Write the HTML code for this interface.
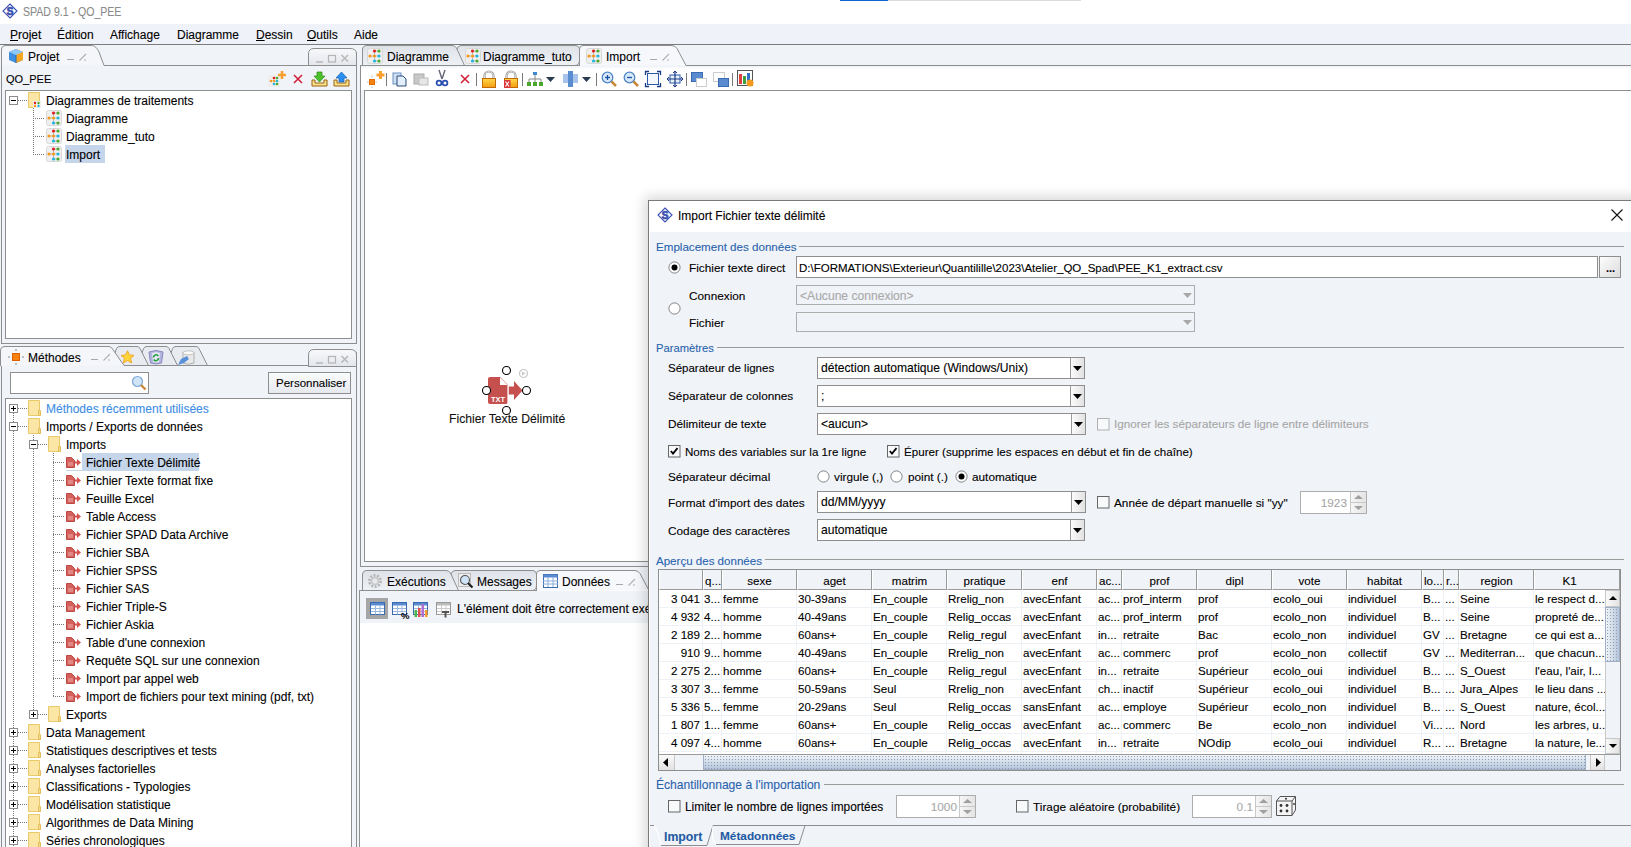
<!DOCTYPE html>
<html><head><meta charset="utf-8"><style>
*{box-sizing:border-box;margin:0;padding:0}
html,body{width:1631px;height:847px;overflow:hidden}
body{position:relative;-webkit-text-stroke:0.1px currentColor;background:#f0f3f8;font-family:"Liberation Sans",sans-serif;font-size:12px;color:#000}
.a{position:absolute}
.t{position:absolute;white-space:nowrap;line-height:18px;height:18px}
.w{background:#fff}
.hl{position:absolute;height:1px;background:#8e8e8e}
.vl{position:absolute;width:1px;background:#8e8e8e}
.u{text-decoration:underline}
.bx{position:absolute;border:1px solid #8e8e8e}
svg{position:absolute;overflow:visible}
</style></head><body>
<div class="a" style="left:0px;top:0px;width:1631px;height:24px;background:#fff"></div>
<div class="a" style="left:840px;top:0px;width:48px;height:1px;background:#0a64d0"></div>
<div class="a" style="left:888px;top:0px;width:193px;height:1px;background:#dcdcdc"></div>
<svg style="left:2px;top:3px" width="17" height="17" viewBox="0 0 17 17"><path d="M8 1 L15 8 L8 15 L1 8 Z" fill="#fff" stroke="#3a50b0" stroke-width="1.1"/><text x="8" y="11.6" font-size="10" font-weight="bold" text-anchor="middle" fill="#3a50b0" stroke="#3a50b0" stroke-width="0.7" font-family="Liberation Sans">S</text></svg>
<div class="t" style="left:23px;top:3px;color:#8a8a8a;font-size:12px;transform:scaleX(0.88);transform-origin:0 0">SPAD 9.1 - QO_PEE</div>
<div class="a" style="left:1px;top:24px;width:1630px;height:20px;background:#eff2f8"></div>
<div class="t" style="left:10px;top:26px;"><span class="u">P</span>rojet</div>
<div class="t" style="left:57px;top:26px;">Édition</div>
<div class="t" style="left:110px;top:26px;">Affichage</div>
<div class="t" style="left:177px;top:26px;">Diagramme</div>
<div class="t" style="left:256px;top:26px;"><span class="u">D</span>essin</div>
<div class="t" style="left:307px;top:26px;"><span class="u">O</span>utils</div>
<div class="t" style="left:354px;top:26px;">Aide</div>
<div class="a" style="left:0px;top:44px;width:1631px;height:1px;background:#7c7c7c"></div>
<div class="a" style="left:1px;top:52px;width:356px;height:292px;border:1px solid #8e8e8e;border-top:none"></div>
<svg style="left:0px;top:45px" width="360" height="21" viewBox="0 0 360 21"><path d="M1.5 20 V5 Q1.5 0.5 6 0.5 H91 C95 0.5 97 3 99 7 L104 20.5" fill="#f4f6fa" stroke="#8e8e8e"/><path d="M104 20.5 H356" stroke="#8e8e8e"/></svg>
<svg style="left:308px;top:48px" width="49" height="19" viewBox="0 0 49 19"><defs><linearGradient id="mmg" x1="0" y1="0" x2="0" y2="1"><stop offset="0" stop-color="#f8f9fb"/><stop offset="1" stop-color="#e3e6eb"/></linearGradient></defs><path d="M0.5 17.5 V6 Q0.5 0.5 6 0.5 H42 Q48.5 0.5 48.5 6 V17.5" fill="url(#mmg)" stroke="#8e8e8e"/><path d="M0 17.5 H49" stroke="#8e8e8e"/><path d="M8 14 H15" stroke="#b0b0b0" stroke-width="1.3"/><rect x="20.5" y="7.5" width="7" height="6.5" fill="none" stroke="#b4b4b4" stroke-width="1.2"/><path d="M33.5 7 L40 13.5 M40 7 L33.5 13.5" stroke="#b8b8b8" stroke-width="1.5"/></svg>
<svg style="left:8px;top:48px" width="16" height="16" viewBox="0 0 16 16"><path d="M1 4 L8 1 L15 4 V12 L8 15 L1 12 Z" fill="#3f8fe0"/><path d="M8 1 L15 4 V12 L8 15 Z" fill="#f5a623"/><path d="M1 4 L8 7 L15 4 L8 1Z" fill="#8ec8f5"/><path d="M8 7 V15" stroke="#2a6ab0"/></svg>
<div class="t" style="left:28px;top:48px;">Projet</div>
<svg style="left:66px;top:53px" width="24" height="8" viewBox="0 0 24 8"><path d="M1 6.5 H8" stroke="#a8a8a8"/><path d="M13.5 7.5 L20 1 M18 7 H20" fill="none" stroke="#b0b0b0" stroke-width="1.1"/></svg>
<div class="t" style="left:6px;top:70px;font-size:11px">QO_PEE</div>
<svg style="left:268px;top:71px" width="18" height="16" viewBox="0 0 18 16"><rect x="0" y="4" width="12" height="12" fill="#eee"/><circle cx="3" cy="10" r="1.3" fill="#f39a1e"/><circle cx="6" cy="7" r="1.3" fill="#e02020"/><circle cx="9" cy="7" r="1.3" fill="#4aa82a"/><circle cx="6" cy="10" r="1.3" fill="#f39a1e"/><circle cx="9" cy="10" r="1.3" fill="#22b5e0"/><circle cx="6" cy="13" r="1.3" fill="#22b5e0"/><circle cx="9" cy="13" r="1.3" fill="#4aa82a"/><path d="M14 0 V8 M10 4 H18" stroke="#f7a030" stroke-width="2.6"/></svg>
<svg style="left:293px;top:74px" width="10" height="10" viewBox="0 0 10 10"><path d="M1 1 L9 9 M9 1 L1 9" stroke="#d0203a" stroke-width="1.6"/></svg>
<svg style="left:311px;top:71px" width="17" height="16" viewBox="0 0 17 16"><path d="M1 9 V15 H16 V9 H13 V12 H4 V9 Z" fill="#f9e08a" stroke="#9a6510"/><path d="M6 1 H11 V5 H14 L8.5 11 L3 5 H6 Z" fill="#4cc22a" stroke="#2f8a18" stroke-width="0.7"/></svg>
<svg style="left:333px;top:71px" width="17" height="16" viewBox="0 0 17 16"><path d="M1 9 V15 H16 V9 H13 V12 H4 V9 Z" fill="#f9e08a" stroke="#9a6510"/><path d="M6 11 H11 V7 H14 L8.5 1 L3 7 H6 Z" fill="#2a8ff0" stroke="#1a5fb0" stroke-width="0.7"/></svg>
<div class="a" style="left:5px;top:90px;width:347px;height:249px;background:#fff;border:1px solid #8e8e8e"></div>
<svg style="left:9px;top:96px" width="9" height="9" viewBox="0 0 9 9"><rect x="0.5" y="0.5" width="8" height="8" fill="#fff" stroke="#8c8c8c"/><path d="M2 4.5 H7" stroke="#000"/></svg>
<svg style="left:18px;top:100px" width="12" height="1" viewBox="0 0 12 1"><path d="M0 0.5 H10" stroke="#777" stroke-dasharray="1 1"/></svg>
<svg style="left:28px;top:92px" width="14" height="16" viewBox="0 0 14 16"><path d="M0.5 0.5 H11.5 V15.5 H0.5 Z" fill="#fbe6a6" stroke="#e9c96a"/><rect x="5" y="9" width="8" height="7" fill="#eee"/><circle cx="7" cy="11" r="1.2" fill="#e02020"/><circle cx="10.5" cy="11" r="1.2" fill="#4aa82a"/><circle cx="7" cy="14" r="1.2" fill="#f39a1e"/><circle cx="10.5" cy="14" r="1.2" fill="#22b5e0"/></svg>
<div class="t" style="left:46px;top:92px;">Diagrammes de traitements</div>
<svg style="left:33px;top:108px" width="1" height="48" viewBox="0 0 1 48"><path d="M0.5 0 V47" stroke="#777" stroke-dasharray="1 1"/></svg>
<svg style="left:33px;top:118px" width="12" height="1" viewBox="0 0 12 1"><path d="M0 0.5 H12" stroke="#777" stroke-dasharray="1 1"/></svg>
<svg style="left:46px;top:110px" width="16" height="16" viewBox="0 0 16 16"><rect x="0.5" y="0.5" width="15" height="15" rx="2" fill="#efefef" stroke="#d8d8d8"/><path d="M7.5 3 V13 M3 8 H12 M7.5 3 H12 M7.5 13 H12" stroke="#bbb" stroke-width="1"/><circle cx="7.5" cy="3" r="1.6" fill="#e02020"/><circle cx="12" cy="3" r="1.6" fill="#4aa82a"/><circle cx="3" cy="8" r="1.6" fill="#f39a1e"/><circle cx="7.5" cy="8" r="1.6" fill="#f39a1e"/><circle cx="12" cy="8" r="1.6" fill="#22b5e0"/><circle cx="7.5" cy="13" r="1.6" fill="#22b5e0"/><circle cx="12" cy="13" r="1.6" fill="#4aa82a"/></svg>
<div class="t" style="left:66px;top:110px;">Diagramme</div>
<svg style="left:33px;top:136px" width="12" height="1" viewBox="0 0 12 1"><path d="M0 0.5 H12" stroke="#777" stroke-dasharray="1 1"/></svg>
<svg style="left:46px;top:128px" width="16" height="16" viewBox="0 0 16 16"><rect x="0.5" y="0.5" width="15" height="15" rx="2" fill="#efefef" stroke="#d8d8d8"/><path d="M7.5 3 V13 M3 8 H12 M7.5 3 H12 M7.5 13 H12" stroke="#bbb" stroke-width="1"/><circle cx="7.5" cy="3" r="1.6" fill="#e02020"/><circle cx="12" cy="3" r="1.6" fill="#4aa82a"/><circle cx="3" cy="8" r="1.6" fill="#f39a1e"/><circle cx="7.5" cy="8" r="1.6" fill="#f39a1e"/><circle cx="12" cy="8" r="1.6" fill="#22b5e0"/><circle cx="7.5" cy="13" r="1.6" fill="#22b5e0"/><circle cx="12" cy="13" r="1.6" fill="#4aa82a"/></svg>
<div class="t" style="left:66px;top:128px;">Diagramme_tuto</div>
<svg style="left:33px;top:154px" width="12" height="1" viewBox="0 0 12 1"><path d="M0 0.5 H12" stroke="#777" stroke-dasharray="1 1"/></svg>
<svg style="left:46px;top:146px" width="16" height="16" viewBox="0 0 16 16"><rect x="0.5" y="0.5" width="15" height="15" rx="2" fill="#efefef" stroke="#d8d8d8"/><path d="M7.5 3 V13 M3 8 H12 M7.5 3 H12 M7.5 13 H12" stroke="#bbb" stroke-width="1"/><circle cx="7.5" cy="3" r="1.6" fill="#e02020"/><circle cx="12" cy="3" r="1.6" fill="#4aa82a"/><circle cx="3" cy="8" r="1.6" fill="#f39a1e"/><circle cx="7.5" cy="8" r="1.6" fill="#f39a1e"/><circle cx="12" cy="8" r="1.6" fill="#22b5e0"/><circle cx="7.5" cy="13" r="1.6" fill="#22b5e0"/><circle cx="12" cy="13" r="1.6" fill="#4aa82a"/></svg>
<div class="a" style="left:65px;top:145px;width:40px;height:18px;background:#c5d5ea"></div>
<div class="t" style="left:66px;top:146px;">Import</div>
<div class="a" style="left:1px;top:352px;width:356px;height:500px;border:1px solid #8e8e8e;border-top:none"></div>
<svg style="left:0px;top:345px" width="360" height="22" viewBox="0 0 360 22"><path d="M167 20.5 L172.5 3.5 Q173.5 1.5 176 1.5 H196 Q198 1.5 199 3.5 L207.5 20.5" fill="#e8ebf0" stroke="#8e8e8e"/><path d="M138 20.5 L143.5 3.5 Q144.5 1.5 147 1.5 H166 Q168 1.5 169 3.5 L177.5 20.5" fill="#e8ebf0" stroke="#8e8e8e"/><path d="M111 20.5 L116.5 3.5 Q117.5 1.5 120 1.5 H137 Q139 1.5 140 3.5 L148.5 20.5" fill="#e8ebf0" stroke="#8e8e8e"/><path d="M0.5 21 V6 Q0.5 1.5 5 1.5 H109 Q111 1.5 112.5 4 L124 20.5 H356" fill="#f4f6fa" stroke="#8e8e8e"/></svg>
<svg style="left:120px;top:350px" width="15" height="14" viewBox="0 0 15 14"><path d="M7.5 0.8 L9.5 5 L14 5.4 L10.6 8.4 L11.7 13 L7.5 10.6 L3.3 13 L4.4 8.4 L1 5.4 L5.5 5 Z" fill="#ffd53a" stroke="#f0a020" stroke-width="0.9"/></svg>
<svg style="left:148px;top:349px" width="16" height="16" viewBox="0 0 16 16"><path d="M1 3 Q8 0 15 3 L13.5 14 Q8 16 2.5 14 Z" fill="#b4b4e0" stroke="#8a8ac0"/><path d="M4 4 Q8 2.5 12 4 L11 13 Q8 14 5 13 Z" fill="#e6e6f6"/><path d="M5.5 8.5 A2.6 2.6 0 0 1 10.3 7 M10.5 9 A2.6 2.6 0 0 1 5.7 10.5" fill="none" stroke="#22a03a" stroke-width="1.6"/></svg>
<svg style="left:178px;top:350px" width="18" height="16" viewBox="0 0 18 16"><path d="M5 2.5 Q10.5 0 16 2.5 V13 Q10.5 15.5 5 13 Z" fill="#e8e8e8" stroke="#b0b0b0"/><ellipse cx="10.5" cy="2.8" rx="5.5" ry="2" fill="#fafafa" stroke="#c0c0c0"/><path d="M0 15 L3 9 L9 6 L11 9 L6 13 Z" fill="#5a90d8"/></svg>
<svg style="left:308px;top:349px" width="49" height="19" viewBox="0 0 49 19"><defs><linearGradient id="mmg" x1="0" y1="0" x2="0" y2="1"><stop offset="0" stop-color="#f8f9fb"/><stop offset="1" stop-color="#e3e6eb"/></linearGradient></defs><path d="M0.5 17.5 V6 Q0.5 0.5 6 0.5 H42 Q48.5 0.5 48.5 6 V17.5" fill="url(#mmg)" stroke="#8e8e8e"/><path d="M0 17.5 H49" stroke="#8e8e8e"/><path d="M8 14 H15" stroke="#b0b0b0" stroke-width="1.3"/><rect x="20.5" y="7.5" width="7" height="6.5" fill="none" stroke="#b4b4b4" stroke-width="1.2"/><path d="M33.5 7 L40 13.5 M40 7 L33.5 13.5" stroke="#b8b8b8" stroke-width="1.5"/></svg>
<svg style="left:8px;top:349px" width="16" height="16" viewBox="0 0 16 16"><rect x="4.5" y="4.5" width="7" height="7" fill="#f7820f" stroke="#e06000"/><path d="M8 0 V2 M8 14 V16 M0 8 H2 M14 8 H16" stroke="#aaa" stroke-width="1.5"/></svg>
<div class="t" style="left:28px;top:349px;">Méthodes</div>
<svg style="left:90px;top:353px" width="24" height="8" viewBox="0 0 24 8"><path d="M1 6.5 H8" stroke="#a8a8a8"/><path d="M13.5 7.5 L20 1 M18 7 H20" fill="none" stroke="#b0b0b0" stroke-width="1.1"/></svg>
<div class="a" style="left:10px;top:372px;width:139px;height:22px;background:#fff;border:1px solid #8e8e8e"></div>
<svg style="left:131px;top:375px" width="16" height="16" viewBox="0 0 16 16"><circle cx="6.5" cy="6.5" r="5" fill="#cfe4f7" stroke="#7aa8d8" stroke-width="1.2"/><path d="M10 10 L14.5 14.5" stroke="#c88a3a" stroke-width="2.4"/></svg>
<div class="a" style="left:268px;top:372px;width:83px;height:22px;border:1px solid #8e8e8e;background:linear-gradient(#fafbfc,#e6e9ee)"></div>
<div class="t" style="left:276px;top:374px;font-size:11.5px">Personnaliser</div>
<div class="a" style="left:5px;top:398px;width:347px;height:460px;background:#fff;border:1px solid #8e8e8e"></div>
<svg style="left:13px;top:413px" width="1" height="440" viewBox="0 0 1 440"><path d="M0.5 0 V440" stroke="#777" stroke-dasharray="1 1"/></svg>
<svg style="left:33px;top:431px" width="1" height="284" viewBox="0 0 1 284"><path d="M0.5 0 V283" stroke="#777" stroke-dasharray="1 1"/></svg>
<svg style="left:53px;top:449px" width="1" height="248" viewBox="0 0 1 248"><path d="M0.5 0 V247" stroke="#777" stroke-dasharray="1 1"/></svg>
<svg style="left:9px;top:404px" width="9" height="9" viewBox="0 0 9 9"><rect x="0.5" y="0.5" width="8" height="8" fill="#fff" stroke="#8c8c8c"/><path d="M2 4.5 H7" stroke="#000"/><path d="M4.5 2 V7" stroke="#000"/></svg>
<svg style="left:18px;top:408px" width="10" height="1" viewBox="0 0 10 1"><path d="M0 0.5 H9" stroke="#777" stroke-dasharray="1 1"/></svg>
<svg style="left:28px;top:400px" width="14" height="16" viewBox="0 0 14 16"><path d="M0.5 0.5 H11.5 V12 H12.5 V15.5 H0.5 Z" fill="#fbe6a6" stroke="#e9c96a"/><path d="M10.5 10.5 H12.5 V15.5 H10.5 Z" fill="#f6d98a" stroke="#e2bf5c"/></svg>
<div class="t" style="left:46px;top:400px;color:#3d8ee6">Méthodes récemment utilisées</div>
<svg style="left:9px;top:422px" width="9" height="9" viewBox="0 0 9 9"><rect x="0.5" y="0.5" width="8" height="8" fill="#fff" stroke="#8c8c8c"/><path d="M2 4.5 H7" stroke="#000"/></svg>
<svg style="left:18px;top:426px" width="10" height="1" viewBox="0 0 10 1"><path d="M0 0.5 H9" stroke="#777" stroke-dasharray="1 1"/></svg>
<svg style="left:28px;top:418px" width="14" height="16" viewBox="0 0 14 16"><path d="M0.5 0.5 H11.5 V12 H12.5 V15.5 H0.5 Z" fill="#fbe6a6" stroke="#e9c96a"/><path d="M10.5 10.5 H12.5 V15.5 H10.5 Z" fill="#f6d98a" stroke="#e2bf5c"/></svg>
<div class="t" style="left:46px;top:418px;">Imports / Exports de données</div>
<svg style="left:29px;top:440px" width="9" height="9" viewBox="0 0 9 9"><rect x="0.5" y="0.5" width="8" height="8" fill="#fff" stroke="#8c8c8c"/><path d="M2 4.5 H7" stroke="#000"/></svg>
<svg style="left:38px;top:444px" width="10" height="1" viewBox="0 0 10 1"><path d="M0 0.5 H9" stroke="#777" stroke-dasharray="1 1"/></svg>
<svg style="left:48px;top:436px" width="14" height="16" viewBox="0 0 14 16"><path d="M0.5 0.5 H11.5 V12 H12.5 V15.5 H0.5 Z" fill="#fbe6a6" stroke="#e9c96a"/><path d="M10.5 10.5 H12.5 V15.5 H10.5 Z" fill="#f6d98a" stroke="#e2bf5c"/></svg>
<div class="t" style="left:66px;top:436px;">Imports</div>
<div class="a" style="left:82px;top:453px;width:117px;height:18px;background:#c5d5ea"></div>
<div class="a" style="left:66px;top:470px;width:16px;height:1px;background:#c5d5ea"></div>
<svg style="left:53px;top:462px" width="13" height="1" viewBox="0 0 13 1"><path d="M0 0.5 H12" stroke="#777" stroke-dasharray="1 1"/></svg>
<svg style="left:66px;top:457px" width="16" height="12" viewBox="0 0 16 12"><path d="M0.5 0.5 H5.5 L8.5 3.5 V10.5 H0.5 Z" fill="#d4605c" stroke="#c04844"/><path d="M2 6 H7 M2 8 H7" stroke="#f2c4c2" stroke-width="0.8"/><path d="M9 4.5 H11 V2 L15 5.5 L11 9 V6.5 H9 Z" fill="#d65450"/></svg>
<div class="t" style="left:86px;top:454px;">Fichier Texte Délimité</div>
<svg style="left:53px;top:480px" width="13" height="1" viewBox="0 0 13 1"><path d="M0 0.5 H12" stroke="#777" stroke-dasharray="1 1"/></svg>
<svg style="left:66px;top:475px" width="16" height="12" viewBox="0 0 16 12"><path d="M0.5 0.5 H5.5 L8.5 3.5 V10.5 H0.5 Z" fill="#d4605c" stroke="#c04844"/><path d="M2 6 H7 M2 8 H7" stroke="#f2c4c2" stroke-width="0.8"/><path d="M9 4.5 H11 V2 L15 5.5 L11 9 V6.5 H9 Z" fill="#d65450"/></svg>
<div class="t" style="left:86px;top:472px;">Fichier Texte format fixe</div>
<svg style="left:53px;top:498px" width="13" height="1" viewBox="0 0 13 1"><path d="M0 0.5 H12" stroke="#777" stroke-dasharray="1 1"/></svg>
<svg style="left:66px;top:493px" width="16" height="12" viewBox="0 0 16 12"><path d="M0.5 0.5 H5.5 L8.5 3.5 V10.5 H0.5 Z" fill="#d4605c" stroke="#c04844"/><path d="M2 6 H7 M2 8 H7" stroke="#f2c4c2" stroke-width="0.8"/><path d="M9 4.5 H11 V2 L15 5.5 L11 9 V6.5 H9 Z" fill="#d65450"/></svg>
<div class="t" style="left:86px;top:490px;">Feuille Excel</div>
<svg style="left:53px;top:516px" width="13" height="1" viewBox="0 0 13 1"><path d="M0 0.5 H12" stroke="#777" stroke-dasharray="1 1"/></svg>
<svg style="left:66px;top:511px" width="16" height="12" viewBox="0 0 16 12"><path d="M0.5 0.5 H5.5 L8.5 3.5 V10.5 H0.5 Z" fill="#d4605c" stroke="#c04844"/><path d="M2 6 H7 M2 8 H7" stroke="#f2c4c2" stroke-width="0.8"/><path d="M9 4.5 H11 V2 L15 5.5 L11 9 V6.5 H9 Z" fill="#d65450"/></svg>
<div class="t" style="left:86px;top:508px;">Table Access</div>
<svg style="left:53px;top:534px" width="13" height="1" viewBox="0 0 13 1"><path d="M0 0.5 H12" stroke="#777" stroke-dasharray="1 1"/></svg>
<svg style="left:66px;top:529px" width="16" height="12" viewBox="0 0 16 12"><path d="M0.5 0.5 H5.5 L8.5 3.5 V10.5 H0.5 Z" fill="#d4605c" stroke="#c04844"/><path d="M2 6 H7 M2 8 H7" stroke="#f2c4c2" stroke-width="0.8"/><path d="M9 4.5 H11 V2 L15 5.5 L11 9 V6.5 H9 Z" fill="#d65450"/></svg>
<div class="t" style="left:86px;top:526px;">Fichier SPAD Data Archive</div>
<svg style="left:53px;top:552px" width="13" height="1" viewBox="0 0 13 1"><path d="M0 0.5 H12" stroke="#777" stroke-dasharray="1 1"/></svg>
<svg style="left:66px;top:547px" width="16" height="12" viewBox="0 0 16 12"><path d="M0.5 0.5 H5.5 L8.5 3.5 V10.5 H0.5 Z" fill="#d4605c" stroke="#c04844"/><path d="M2 6 H7 M2 8 H7" stroke="#f2c4c2" stroke-width="0.8"/><path d="M9 4.5 H11 V2 L15 5.5 L11 9 V6.5 H9 Z" fill="#d65450"/></svg>
<div class="t" style="left:86px;top:544px;">Fichier SBA</div>
<svg style="left:53px;top:570px" width="13" height="1" viewBox="0 0 13 1"><path d="M0 0.5 H12" stroke="#777" stroke-dasharray="1 1"/></svg>
<svg style="left:66px;top:565px" width="16" height="12" viewBox="0 0 16 12"><path d="M0.5 0.5 H5.5 L8.5 3.5 V10.5 H0.5 Z" fill="#d4605c" stroke="#c04844"/><path d="M2 6 H7 M2 8 H7" stroke="#f2c4c2" stroke-width="0.8"/><path d="M9 4.5 H11 V2 L15 5.5 L11 9 V6.5 H9 Z" fill="#d65450"/></svg>
<div class="t" style="left:86px;top:562px;">Fichier SPSS</div>
<svg style="left:53px;top:588px" width="13" height="1" viewBox="0 0 13 1"><path d="M0 0.5 H12" stroke="#777" stroke-dasharray="1 1"/></svg>
<svg style="left:66px;top:583px" width="16" height="12" viewBox="0 0 16 12"><path d="M0.5 0.5 H5.5 L8.5 3.5 V10.5 H0.5 Z" fill="#d4605c" stroke="#c04844"/><path d="M2 6 H7 M2 8 H7" stroke="#f2c4c2" stroke-width="0.8"/><path d="M9 4.5 H11 V2 L15 5.5 L11 9 V6.5 H9 Z" fill="#d65450"/></svg>
<div class="t" style="left:86px;top:580px;">Fichier SAS</div>
<svg style="left:53px;top:606px" width="13" height="1" viewBox="0 0 13 1"><path d="M0 0.5 H12" stroke="#777" stroke-dasharray="1 1"/></svg>
<svg style="left:66px;top:601px" width="16" height="12" viewBox="0 0 16 12"><path d="M0.5 0.5 H5.5 L8.5 3.5 V10.5 H0.5 Z" fill="#d4605c" stroke="#c04844"/><path d="M2 6 H7 M2 8 H7" stroke="#f2c4c2" stroke-width="0.8"/><path d="M9 4.5 H11 V2 L15 5.5 L11 9 V6.5 H9 Z" fill="#d65450"/></svg>
<div class="t" style="left:86px;top:598px;">Fichier Triple-S</div>
<svg style="left:53px;top:624px" width="13" height="1" viewBox="0 0 13 1"><path d="M0 0.5 H12" stroke="#777" stroke-dasharray="1 1"/></svg>
<svg style="left:66px;top:619px" width="16" height="12" viewBox="0 0 16 12"><path d="M0.5 0.5 H5.5 L8.5 3.5 V10.5 H0.5 Z" fill="#d4605c" stroke="#c04844"/><path d="M2 6 H7 M2 8 H7" stroke="#f2c4c2" stroke-width="0.8"/><path d="M9 4.5 H11 V2 L15 5.5 L11 9 V6.5 H9 Z" fill="#d65450"/></svg>
<div class="t" style="left:86px;top:616px;">Fichier Askia</div>
<svg style="left:53px;top:642px" width="13" height="1" viewBox="0 0 13 1"><path d="M0 0.5 H12" stroke="#777" stroke-dasharray="1 1"/></svg>
<svg style="left:66px;top:637px" width="16" height="12" viewBox="0 0 16 12"><path d="M0.5 0.5 H5.5 L8.5 3.5 V10.5 H0.5 Z" fill="#d4605c" stroke="#c04844"/><path d="M2 6 H7 M2 8 H7" stroke="#f2c4c2" stroke-width="0.8"/><path d="M9 4.5 H11 V2 L15 5.5 L11 9 V6.5 H9 Z" fill="#d65450"/></svg>
<div class="t" style="left:86px;top:634px;">Table d'une connexion</div>
<svg style="left:53px;top:660px" width="13" height="1" viewBox="0 0 13 1"><path d="M0 0.5 H12" stroke="#777" stroke-dasharray="1 1"/></svg>
<svg style="left:66px;top:655px" width="16" height="12" viewBox="0 0 16 12"><path d="M0.5 0.5 H5.5 L8.5 3.5 V10.5 H0.5 Z" fill="#d4605c" stroke="#c04844"/><path d="M2 6 H7 M2 8 H7" stroke="#f2c4c2" stroke-width="0.8"/><path d="M9 4.5 H11 V2 L15 5.5 L11 9 V6.5 H9 Z" fill="#d65450"/></svg>
<div class="t" style="left:86px;top:652px;">Requête SQL sur une connexion</div>
<svg style="left:53px;top:678px" width="13" height="1" viewBox="0 0 13 1"><path d="M0 0.5 H12" stroke="#777" stroke-dasharray="1 1"/></svg>
<svg style="left:66px;top:673px" width="16" height="12" viewBox="0 0 16 12"><path d="M0.5 0.5 H5.5 L8.5 3.5 V10.5 H0.5 Z" fill="#d4605c" stroke="#c04844"/><path d="M2 6 H7 M2 8 H7" stroke="#f2c4c2" stroke-width="0.8"/><path d="M9 4.5 H11 V2 L15 5.5 L11 9 V6.5 H9 Z" fill="#d65450"/></svg>
<div class="t" style="left:86px;top:670px;">Import par appel web</div>
<svg style="left:53px;top:696px" width="13" height="1" viewBox="0 0 13 1"><path d="M0 0.5 H12" stroke="#777" stroke-dasharray="1 1"/></svg>
<svg style="left:66px;top:691px" width="16" height="12" viewBox="0 0 16 12"><path d="M0.5 0.5 H5.5 L8.5 3.5 V10.5 H0.5 Z" fill="#d4605c" stroke="#c04844"/><path d="M2 6 H7 M2 8 H7" stroke="#f2c4c2" stroke-width="0.8"/><path d="M9 4.5 H11 V2 L15 5.5 L11 9 V6.5 H9 Z" fill="#d65450"/></svg>
<div class="t" style="left:86px;top:688px;">Import de fichiers pour text mining (pdf, txt)</div>
<svg style="left:29px;top:710px" width="9" height="9" viewBox="0 0 9 9"><rect x="0.5" y="0.5" width="8" height="8" fill="#fff" stroke="#8c8c8c"/><path d="M2 4.5 H7" stroke="#000"/><path d="M4.5 2 V7" stroke="#000"/></svg>
<svg style="left:38px;top:714px" width="10" height="1" viewBox="0 0 10 1"><path d="M0 0.5 H9" stroke="#777" stroke-dasharray="1 1"/></svg>
<svg style="left:48px;top:706px" width="14" height="16" viewBox="0 0 14 16"><path d="M0.5 0.5 H11.5 V12 H12.5 V15.5 H0.5 Z" fill="#fbe6a6" stroke="#e9c96a"/><path d="M10.5 10.5 H12.5 V15.5 H10.5 Z" fill="#f6d98a" stroke="#e2bf5c"/></svg>
<div class="t" style="left:66px;top:706px;">Exports</div>
<svg style="left:9px;top:728px" width="9" height="9" viewBox="0 0 9 9"><rect x="0.5" y="0.5" width="8" height="8" fill="#fff" stroke="#8c8c8c"/><path d="M2 4.5 H7" stroke="#000"/><path d="M4.5 2 V7" stroke="#000"/></svg>
<svg style="left:18px;top:732px" width="10" height="1" viewBox="0 0 10 1"><path d="M0 0.5 H9" stroke="#777" stroke-dasharray="1 1"/></svg>
<svg style="left:28px;top:724px" width="14" height="16" viewBox="0 0 14 16"><path d="M0.5 0.5 H11.5 V12 H12.5 V15.5 H0.5 Z" fill="#fbe6a6" stroke="#e9c96a"/><path d="M10.5 10.5 H12.5 V15.5 H10.5 Z" fill="#f6d98a" stroke="#e2bf5c"/></svg>
<div class="t" style="left:46px;top:724px;">Data Management</div>
<svg style="left:9px;top:746px" width="9" height="9" viewBox="0 0 9 9"><rect x="0.5" y="0.5" width="8" height="8" fill="#fff" stroke="#8c8c8c"/><path d="M2 4.5 H7" stroke="#000"/><path d="M4.5 2 V7" stroke="#000"/></svg>
<svg style="left:18px;top:750px" width="10" height="1" viewBox="0 0 10 1"><path d="M0 0.5 H9" stroke="#777" stroke-dasharray="1 1"/></svg>
<svg style="left:28px;top:742px" width="14" height="16" viewBox="0 0 14 16"><path d="M0.5 0.5 H11.5 V12 H12.5 V15.5 H0.5 Z" fill="#fbe6a6" stroke="#e9c96a"/><path d="M10.5 10.5 H12.5 V15.5 H10.5 Z" fill="#f6d98a" stroke="#e2bf5c"/></svg>
<div class="t" style="left:46px;top:742px;">Statistiques descriptives et tests</div>
<svg style="left:9px;top:764px" width="9" height="9" viewBox="0 0 9 9"><rect x="0.5" y="0.5" width="8" height="8" fill="#fff" stroke="#8c8c8c"/><path d="M2 4.5 H7" stroke="#000"/><path d="M4.5 2 V7" stroke="#000"/></svg>
<svg style="left:18px;top:768px" width="10" height="1" viewBox="0 0 10 1"><path d="M0 0.5 H9" stroke="#777" stroke-dasharray="1 1"/></svg>
<svg style="left:28px;top:760px" width="14" height="16" viewBox="0 0 14 16"><path d="M0.5 0.5 H11.5 V12 H12.5 V15.5 H0.5 Z" fill="#fbe6a6" stroke="#e9c96a"/><path d="M10.5 10.5 H12.5 V15.5 H10.5 Z" fill="#f6d98a" stroke="#e2bf5c"/></svg>
<div class="t" style="left:46px;top:760px;">Analyses factorielles</div>
<svg style="left:9px;top:782px" width="9" height="9" viewBox="0 0 9 9"><rect x="0.5" y="0.5" width="8" height="8" fill="#fff" stroke="#8c8c8c"/><path d="M2 4.5 H7" stroke="#000"/><path d="M4.5 2 V7" stroke="#000"/></svg>
<svg style="left:18px;top:786px" width="10" height="1" viewBox="0 0 10 1"><path d="M0 0.5 H9" stroke="#777" stroke-dasharray="1 1"/></svg>
<svg style="left:28px;top:778px" width="14" height="16" viewBox="0 0 14 16"><path d="M0.5 0.5 H11.5 V12 H12.5 V15.5 H0.5 Z" fill="#fbe6a6" stroke="#e9c96a"/><path d="M10.5 10.5 H12.5 V15.5 H10.5 Z" fill="#f6d98a" stroke="#e2bf5c"/></svg>
<div class="t" style="left:46px;top:778px;">Classifications - Typologies</div>
<svg style="left:9px;top:800px" width="9" height="9" viewBox="0 0 9 9"><rect x="0.5" y="0.5" width="8" height="8" fill="#fff" stroke="#8c8c8c"/><path d="M2 4.5 H7" stroke="#000"/><path d="M4.5 2 V7" stroke="#000"/></svg>
<svg style="left:18px;top:804px" width="10" height="1" viewBox="0 0 10 1"><path d="M0 0.5 H9" stroke="#777" stroke-dasharray="1 1"/></svg>
<svg style="left:28px;top:796px" width="14" height="16" viewBox="0 0 14 16"><path d="M0.5 0.5 H11.5 V12 H12.5 V15.5 H0.5 Z" fill="#fbe6a6" stroke="#e9c96a"/><path d="M10.5 10.5 H12.5 V15.5 H10.5 Z" fill="#f6d98a" stroke="#e2bf5c"/></svg>
<div class="t" style="left:46px;top:796px;">Modélisation statistique</div>
<svg style="left:9px;top:818px" width="9" height="9" viewBox="0 0 9 9"><rect x="0.5" y="0.5" width="8" height="8" fill="#fff" stroke="#8c8c8c"/><path d="M2 4.5 H7" stroke="#000"/><path d="M4.5 2 V7" stroke="#000"/></svg>
<svg style="left:18px;top:822px" width="10" height="1" viewBox="0 0 10 1"><path d="M0 0.5 H9" stroke="#777" stroke-dasharray="1 1"/></svg>
<svg style="left:28px;top:814px" width="14" height="16" viewBox="0 0 14 16"><path d="M0.5 0.5 H11.5 V12 H12.5 V15.5 H0.5 Z" fill="#fbe6a6" stroke="#e9c96a"/><path d="M10.5 10.5 H12.5 V15.5 H10.5 Z" fill="#f6d98a" stroke="#e2bf5c"/></svg>
<div class="t" style="left:46px;top:814px;">Algorithmes de Data Mining</div>
<svg style="left:9px;top:836px" width="9" height="9" viewBox="0 0 9 9"><rect x="0.5" y="0.5" width="8" height="8" fill="#fff" stroke="#8c8c8c"/><path d="M2 4.5 H7" stroke="#000"/><path d="M4.5 2 V7" stroke="#000"/></svg>
<svg style="left:18px;top:840px" width="10" height="1" viewBox="0 0 10 1"><path d="M0 0.5 H9" stroke="#777" stroke-dasharray="1 1"/></svg>
<svg style="left:28px;top:832px" width="14" height="16" viewBox="0 0 14 16"><path d="M0.5 0.5 H11.5 V12 H12.5 V15.5 H0.5 Z" fill="#fbe6a6" stroke="#e9c96a"/><path d="M10.5 10.5 H12.5 V15.5 H10.5 Z" fill="#f6d98a" stroke="#e2bf5c"/></svg>
<div class="t" style="left:46px;top:832px;">Séries chronologiques</div>
<div class="a" style="left:360px;top:65px;width:1280px;height:502px;border:1px solid #8e8e8e;border-top:none"></div>
<svg style="left:359px;top:45px" width="1280" height="22" viewBox="0 0 1280 22"><defs><linearGradient id="tg" x1="0" y1="0" x2="0" y2="1"><stop offset="0" stop-color="#dfe3e9"/><stop offset="1" stop-color="#eef1f5"/></linearGradient></defs><path d="M94 20.5 L98 4 Q99 0.5 102 0.5 H216 Q220.5 0.5 220.5 5 V15 Q220.5 20.5 216 20.5" fill="url(#tg)" stroke="#8e8e8e"/><path d="M3.5 20.5 V5 Q3.5 0.5 8 0.5 H93 Q96 0.5 97.5 3 L105.5 20.5" fill="url(#tg)" stroke="#8e8e8e"/><path d="M220.5 20.5 V4 Q220.5 0.5 224 0.5 H313 Q316 0.5 318 3.5 L327 20.5 H1280" fill="#f6f8fb" stroke="#8e8e8e"/><path d="M1 20.5 H221" stroke="#8e8e8e"/></svg>
<svg style="left:367px;top:48px" width="16" height="16" viewBox="0 0 16 16"><rect x="0.5" y="0.5" width="15" height="15" rx="2" fill="#efefef" stroke="#d8d8d8"/><path d="M7.5 3 V13 M3 8 H12 M7.5 3 H12 M7.5 13 H12" stroke="#bbb" stroke-width="1"/><circle cx="7.5" cy="3" r="1.6" fill="#e02020"/><circle cx="12" cy="3" r="1.6" fill="#4aa82a"/><circle cx="3" cy="8" r="1.6" fill="#f39a1e"/><circle cx="7.5" cy="8" r="1.6" fill="#f39a1e"/><circle cx="12" cy="8" r="1.6" fill="#22b5e0"/><circle cx="7.5" cy="13" r="1.6" fill="#22b5e0"/><circle cx="12" cy="13" r="1.6" fill="#4aa82a"/></svg>
<div class="t" style="left:387px;top:48px;">Diagramme</div>
<svg style="left:465px;top:48px" width="16" height="16" viewBox="0 0 16 16"><rect x="0.5" y="0.5" width="15" height="15" rx="2" fill="#efefef" stroke="#d8d8d8"/><path d="M7.5 3 V13 M3 8 H12 M7.5 3 H12 M7.5 13 H12" stroke="#bbb" stroke-width="1"/><circle cx="7.5" cy="3" r="1.6" fill="#e02020"/><circle cx="12" cy="3" r="1.6" fill="#4aa82a"/><circle cx="3" cy="8" r="1.6" fill="#f39a1e"/><circle cx="7.5" cy="8" r="1.6" fill="#f39a1e"/><circle cx="12" cy="8" r="1.6" fill="#22b5e0"/><circle cx="7.5" cy="13" r="1.6" fill="#22b5e0"/><circle cx="12" cy="13" r="1.6" fill="#4aa82a"/></svg>
<div class="t" style="left:483px;top:48px;">Diagramme_tuto</div>
<svg style="left:586px;top:48px" width="16" height="16" viewBox="0 0 16 16"><rect x="0.5" y="0.5" width="15" height="15" rx="2" fill="#efefef" stroke="#d8d8d8"/><path d="M7.5 3 V13 M3 8 H12 M7.5 3 H12 M7.5 13 H12" stroke="#bbb" stroke-width="1"/><circle cx="7.5" cy="3" r="1.6" fill="#e02020"/><circle cx="12" cy="3" r="1.6" fill="#4aa82a"/><circle cx="3" cy="8" r="1.6" fill="#f39a1e"/><circle cx="7.5" cy="8" r="1.6" fill="#f39a1e"/><circle cx="12" cy="8" r="1.6" fill="#22b5e0"/><circle cx="7.5" cy="13" r="1.6" fill="#22b5e0"/><circle cx="12" cy="13" r="1.6" fill="#4aa82a"/></svg>
<div class="t" style="left:606px;top:48px;">Import</div>
<svg style="left:649px;top:53px" width="24" height="8" viewBox="0 0 24 8"><path d="M1 6.5 H8" stroke="#a8a8a8"/><path d="M13.5 7.5 L20 1 M18 7 H20" fill="none" stroke="#b0b0b0" stroke-width="1.1"/></svg>
<div class="a" style="left:361px;top:66px;width:1270px;height:24px;background:linear-gradient(#eef2f8 0px,#fff 3px,#fff)"></div>
<div class="a" style="left:364px;top:90px;width:1280px;height:472px;background:#fff;border:1px solid #8e8e8e"></div>
<svg style="left:367px;top:70px" width="18" height="18" viewBox="0 0 18 18"><rect x="2.5" y="9.5" width="5" height="5" fill="#f7820f" stroke="#e06a00"/><path d="M5 5.5 V7.5 M5 16.5 V18 M0 12 H1.5 M8.5 12 H10" stroke="#bbb"/><path d="M9.5 5 H17.5 M13.5 1 V9" stroke="#f9a030" stroke-width="3"/></svg>
<div class="a" style="left:386px;top:73px;width:1px;height:13px;background:#7a7a7a"></div>
<svg style="left:392px;top:71px" width="15" height="16" viewBox="0 0 15 16"><rect x="1" y="2" width="8" height="11" fill="#cfe0f5" stroke="#6a8fc0"/><path d="M5 5 H11 L14 8 V15 H5 Z" fill="#e2eefb" stroke="#2a4a78"/></svg>
<svg style="left:413px;top:72px" width="16" height="14" viewBox="0 0 16 14"><rect x="1" y="2" width="10" height="10" fill="#c8c8c8" stroke="#aaa"/><rect x="6" y="6" width="9" height="7" fill="#e6e6e6" stroke="#bbb"/></svg>
<svg style="left:436px;top:70px" width="12" height="17" viewBox="0 0 12 17"><path d="M3 0 L6 9 M9 0 L6 9" stroke="#667" stroke-width="1.4"/><circle cx="3" cy="13" r="2.4" fill="none" stroke="#2a4fb0" stroke-width="1.8"/><circle cx="9" cy="13" r="2.4" fill="none" stroke="#2a4fb0" stroke-width="1.8"/></svg>
<svg style="left:460px;top:74px" width="10" height="10" viewBox="0 0 10 10"><path d="M1 1 L9 9 M9 1 L1 9" stroke="#d0203a" stroke-width="1.6"/></svg>
<div class="a" style="left:476px;top:73px;width:1px;height:13px;background:#7a7a7a"></div>
<svg style="left:481px;top:70px" width="16" height="18" viewBox="0 0 16 18"><defs><linearGradient id="lk481" x1="0" y1="0" x2="0" y2="1"><stop offset="0" stop-color="#ffd84a"/><stop offset="1" stop-color="#f59a10"/></linearGradient></defs><path d="M3.5 9 V6 A4.5 4.5 0 0 1 12.5 6 V9" fill="none" stroke="#9a9a9a" stroke-width="2.2"/><path d="M3.5 9 V6 A4.5 4.5 0 0 1 12.5 6 V9" fill="none" stroke="#e8e8e8" stroke-width="0.8"/><rect x="1.5" y="8.5" width="13" height="9" fill="url(#lk481)" stroke="#c06a00"/></svg>
<svg style="left:503px;top:70px" width="16" height="18" viewBox="0 0 16 18"><defs><linearGradient id="lk503" x1="0" y1="0" x2="0" y2="1"><stop offset="0" stop-color="#ffd84a"/><stop offset="1" stop-color="#f59a10"/></linearGradient></defs><path d="M3.5 9 V6 A4.5 4.5 0 0 1 12.5 6 V9" fill="none" stroke="#9a9a9a" stroke-width="2.2"/><path d="M3.5 9 V6 A4.5 4.5 0 0 1 12.5 6 V9" fill="none" stroke="#e8e8e8" stroke-width="0.8"/><rect x="1.5" y="8.5" width="13" height="9" fill="url(#lk503)" stroke="#c06a00"/><rect x="1" y="10" width="6.5" height="8" fill="#d83838"/><path d="M2.5 11.5 L6 16.5 M6 11.5 L2.5 16.5" stroke="#fff" stroke-width="1.1"/></svg>
<div class="a" style="left:522px;top:73px;width:1px;height:13px;background:#7a7a7a"></div>
<svg style="left:527px;top:71px" width="17" height="16" viewBox="0 0 17 16"><rect x="6" y="1" width="4" height="3" fill="#3a8ad8"/><path d="M8 4 V8 M2 8 H14 M2 8 V11 M8 8 V11 M14 8 V11" stroke="#888"/><rect x="0" y="11" width="4" height="4" fill="#4aa82a"/><rect x="6" y="11" width="4" height="4" fill="#4aa82a"/><rect x="12" y="11" width="4" height="4" fill="#4aa82a"/></svg>
<svg style="left:546px;top:77px" width="10" height="6" viewBox="0 0 10 6"><path d="M0 0 H9 L4.5 5 Z" fill="#2a3a50"/></svg>
<svg style="left:563px;top:70px" width="16" height="18" viewBox="0 0 16 18"><rect x="0" y="4" width="5" height="9" fill="#a8c4ec"/><rect x="5" y="1" width="5" height="16" fill="#5a8cd0"/><rect x="10" y="4" width="5" height="9" fill="#a8c4ec"/></svg>
<svg style="left:582px;top:77px" width="10" height="6" viewBox="0 0 10 6"><path d="M0 0 H9 L4.5 5 Z" fill="#2a3a50"/></svg>
<div class="a" style="left:596px;top:73px;width:1px;height:13px;background:#7a7a7a"></div>
<svg style="left:601px;top:71px" width="16" height="16" viewBox="0 0 16 16"><circle cx="6.5" cy="6.5" r="5.3" fill="#d6e8fa" stroke="#4f86c8" stroke-width="1.3"/><path d="M10.5 10.5 L15 15" stroke="#c88a3a" stroke-width="2.5"/><path d="M4 6.5 H9" stroke="#1a50a0" stroke-width="1.3"/><path d="M6.5 4 V9" stroke="#1a50a0" stroke-width="1.3"/></svg>
<svg style="left:623px;top:71px" width="16" height="16" viewBox="0 0 16 16"><circle cx="6.5" cy="6.5" r="5.3" fill="#d6e8fa" stroke="#4f86c8" stroke-width="1.3"/><path d="M10.5 10.5 L15 15" stroke="#c88a3a" stroke-width="2.5"/><path d="M4 6.5 H9" stroke="#1a50a0" stroke-width="1.3"/></svg>
<svg style="left:645px;top:71px" width="16" height="16" viewBox="0 0 16 16"><rect x="2.5" y="2.5" width="11" height="11" fill="#f4f8fc" stroke="#2a5aa8"/><path d="M0.5 4 V0.5 H4 M12 0.5 H15.5 V4 M15.5 12 V15.5 H12 M4 15.5 H0.5 V12" stroke="#1a3a88" stroke-width="1.3" fill="none"/></svg>
<svg style="left:667px;top:71px" width="16" height="16" viewBox="0 0 16 16"><rect x="3" y="4" width="10" height="8" fill="#e8f0f8" stroke="#2a5aa8"/><path d="M8 0 V16 M0 8 H16" stroke="#1a3a88" stroke-width="1.2"/><path d="M6 2 L8 0 L10 2 M6 14 L8 16 L10 14 M2 6 L0 8 L2 10 M14 6 L16 8 L14 10" fill="none" stroke="#1a3a88"/></svg>
<div class="a" style="left:686px;top:73px;width:1px;height:13px;background:#7a7a7a"></div>
<svg style="left:691px;top:72px" width="16" height="15" viewBox="0 0 16 15"><rect x="0.5" y="0.5" width="11" height="9" fill="#5a8ad0" stroke="#3a6ab0"/><rect x="5.5" y="6.5" width="10" height="8" fill="#fff" stroke="#ccc"/></svg>
<svg style="left:713px;top:72px" width="16" height="15" viewBox="0 0 16 15"><rect x="0.5" y="0.5" width="11" height="9" fill="#fff" stroke="#ccc"/><rect x="5.5" y="6.5" width="10" height="8" fill="#5a8ad0" stroke="#3a6ab0"/></svg>
<div class="a" style="left:732px;top:73px;width:1px;height:13px;background:#7a7a7a"></div>
<svg style="left:737px;top:70px" width="17" height="17" viewBox="0 0 17 17"><rect x="0.5" y="0.5" width="15" height="15" fill="#fff" stroke="#555"/><rect x="2" y="4" width="3" height="10" fill="#e04040"/><rect x="6" y="6" width="3" height="8" fill="#40a040"/><rect x="10" y="3" width="3" height="11" fill="#3070d0"/><circle cx="13" cy="13" r="3.5" fill="#f39a1e"/></svg>
<svg style="left:486px;top:370px" width="42" height="42" viewBox="0 0 42 42"><path d="M2 9 Q2 7 4 7 H14 L22 15 V32 Q22 34 20 34 H4 Q2 34 2 32 Z" fill="#c5504d"/><path d="M14 7.5 V15 H21.5 Z" fill="#fff"/><path d="M22.5 16.5 H28 V11 L36.5 20.5 L28 30 V24.5 H22.5 Z" fill="#c5504d"/><path d="M22 15 V34" stroke="#fff" stroke-width="1.2"/><rect x="2" y="26" width="20" height="0" fill="#fff"/><text x="12" y="31.5" font-size="7.5" font-weight="bold" fill="#fff" text-anchor="middle" font-family="Liberation Sans">TXT</text><circle cx="20.5" cy="0.5" r="4" fill="#fff" stroke="#000" stroke-width="1.1"/><circle cx="0.5" cy="20.5" r="4" fill="#fff" stroke="#000" stroke-width="1.1"/><circle cx="40.5" cy="20.5" r="4" fill="#fff" stroke="#000" stroke-width="1.1"/><circle cx="20.5" cy="40.5" r="4" fill="#fff" stroke="#000" stroke-width="1.1"/><circle cx="37.5" cy="3.5" r="4" fill="#fff" stroke="#c8c8c8" stroke-width="1.2"/><path d="M36 1.5 L39.5 3.5 L36 5.5Z" fill="#c8c8c8"/></svg>
<div class="t" style="left:449px;top:410px;font-size:12.2px;color:#111">Fichier Texte Délimité</div>
<div class="a" style="left:359px;top:590px;width:1280px;height:300px;border:1px solid #8e8e8e;border-top:none;background:#fff"></div>
<svg style="left:359px;top:570px" width="1280" height="22" viewBox="0 0 1280 22"><defs><linearGradient id="tg2" x1="0" y1="0" x2="0" y2="1"><stop offset="0" stop-color="#dfe3e9"/><stop offset="1" stop-color="#eef1f5"/></linearGradient></defs><path d="M88 20.5 L92 4 Q93 0.5 96 0.5 H173 Q177.5 0.5 177.5 5 V15 Q177.5 20.5 173 20.5" fill="url(#tg2)" stroke="#8e8e8e"/><path d="M3.5 20.5 V5 Q3.5 0.5 8 0.5 H87 Q90 0.5 91.5 3 L99.5 20.5" fill="url(#tg2)" stroke="#8e8e8e"/><path d="M177.5 20.5 V4 Q177.5 0.5 181 0.5 H276 Q279 0.5 281 3.5 L290 20.5 H1280" fill="#f6f8fb" stroke="#8e8e8e"/><path d="M1 20.5 H178" stroke="#8e8e8e"/></svg>
<svg style="left:367px;top:573px" width="16" height="16" viewBox="0 0 16 16"><circle cx="8" cy="8" r="5.5" fill="none" stroke="#b8b8b8" stroke-width="3" stroke-dasharray="2 1.4"/><circle cx="8" cy="8" r="3.3" fill="none" stroke="#c8c8c8" stroke-width="1.5"/></svg>
<div class="t" style="left:387px;top:573px;">Exécutions</div>
<svg style="left:458px;top:573px" width="16" height="16" viewBox="0 0 16 16"><rect x="0.5" y="0.5" width="12" height="13" fill="#eee" stroke="#bbb"/><circle cx="7" cy="7" r="4.5" fill="#cfe4f7" stroke="#555" stroke-width="1.1"/><path d="M10 10 L14.5 14.5" stroke="#222" stroke-width="2.2"/></svg>
<div class="t" style="left:477px;top:573px;">Messages</div>
<svg style="left:543px;top:574px" width="15" height="14" viewBox="0 0 15 14"><rect x="0.5" y="0.5" width="14" height="13" fill="#fff" stroke="#3a6ab0"/><rect x="0.5" y="0.5" width="14" height="3" fill="#5a8ad0"/><path d="M5 3 V13 M10 3 V13 M0 7 H15 M0 10 H15" stroke="#8ab0e0"/></svg>
<div class="t" style="left:562px;top:573px;">Données</div>
<svg style="left:615px;top:578px" width="24" height="8" viewBox="0 0 24 8"><path d="M1 6.5 H8" stroke="#a8a8a8"/><path d="M13.5 7.5 L20 1 M18 7 H20" fill="none" stroke="#b0b0b0" stroke-width="1.1"/></svg>
<div class="a" style="left:360px;top:591px;width:1270px;height:32px;background:#f0f3f8"></div>
<div class="a" style="left:366px;top:598px;width:22px;height:21px;background:#a6a6a6"></div>
<svg style="left:370px;top:602px" width="16" height="14" viewBox="0 0 16 14"><rect x="0.5" y="0.5" width="14" height="12" fill="#fff" stroke="#3a6ab0"/><rect x="1" y="1" width="13" height="2.5" fill="#5a8ad0"/><path d="M5.5 3.5 V12.5 M10 3.5 V12.5 M1 6.5 H14 M1 9.5 H14" stroke="#9ab8e0" stroke-width="1"/></svg>
<svg style="left:392px;top:602px" width="18" height="17" viewBox="0 0 18 17"><rect x="0.5" y="0.5" width="14" height="12" fill="#fff" stroke="#3a6ab0"/><rect x="1" y="1" width="13" height="2.5" fill="#5a8ad0"/><path d="M5.5 3.5 V12.5 M10 3.5 V12.5 M1 6.5 H14 M1 9.5 H14" stroke="#9ab8e0" stroke-width="1"/><text x="9" y="16.5" font-size="9.5" font-weight="bold" font-family="Liberation Sans" fill="#000">%</text></svg>
<svg style="left:413px;top:602px" width="16" height="16" viewBox="0 0 16 16"><rect x="0.5" y="0.5" width="14" height="12" fill="#fff" stroke="#3a6ab0"/><rect x="1" y="1" width="13" height="2.5" fill="#5a8ad0"/><path d="M5.5 3.5 V12.5 M10 3.5 V12.5 M1 6.5 H14 M1 9.5 H14" stroke="#9ab8e0" stroke-width="1"/><rect x="1.5" y="8" width="2.5" height="7" fill="#4ab84a"/><rect x="5" y="6" width="2.5" height="9" fill="#e05050"/><rect x="8.5" y="2" width="2.5" height="13" fill="#b070d0"/><rect x="12" y="8" width="2.5" height="7" fill="#f7a030"/></svg>
<svg style="left:436px;top:602px" width="16" height="16" viewBox="0 0 16 16"><rect x="0.5" y="0.5" width="14" height="12" fill="#fff" stroke="#999"/><rect x="1" y="1" width="13" height="2.5" fill="#bbb"/><path d="M5.5 3.5 V12.5 M10 3.5 V12.5 M1 6.5 H14 M1 9.5 H14" stroke="#ccc" stroke-width="1"/><path d="M6 10 H13 M9.5 10 V15.5" stroke="#555" stroke-width="2"/></svg>
<div class="t" style="left:457px;top:600px;">L'élément doit être correctement exécuté pour afficher les données</div>
<div class="a" style="left:636px;top:190px;width:1000px;height:700px;box-shadow:0 0 12px 3px rgba(0,0,0,0.17);left:648px;top:200px;width:1000px;height:700px"></div>
<div class="a" style="left:648px;top:200px;width:1000px;height:700px;background:#fff;border:1px solid #7a7a7a"></div>
<div class="a" style="left:650px;top:232px;width:990px;height:660px;background:#f0f3f8"></div>
<svg style="left:657px;top:207px" width="17" height="17" viewBox="0 0 17 17"><path d="M8 1 L15 8 L8 15 L1 8 Z" fill="#fff" stroke="#3a50b0" stroke-width="1.1"/><text x="8" y="11.6" font-size="10" font-weight="bold" text-anchor="middle" fill="#3a50b0" stroke="#3a50b0" stroke-width="0.7" font-family="Liberation Sans">S</text></svg>
<div class="t" style="left:678px;top:207px;font-size:12px">Import Fichier texte délimité</div>
<svg style="left:1611px;top:209px" width="12" height="12" viewBox="0 0 12 12"><path d="M0.5 0.5 L11.5 11.5 M11.5 0.5 L0.5 11.5" stroke="#111" stroke-width="1.1"/></svg>
<div class="t" style="left:656px;top:238px;color:#2a63ad;font-size:11.6px">Emplacement des données</div>
<div class="a" style="left:799px;top:246px;width:825px;height:1px;background:#9a9a9a"></div>
<svg style="left:667.5px;top:260.5px" width="13" height="13" viewBox="0 0 13 13"><circle cx="6.5" cy="6.5" r="5.6" fill="#fff" stroke="#666" stroke-width="0.8"/><circle cx="6.5" cy="6.5" r="3" fill="#000"/></svg>
<div class="t" style="left:689px;top:259px;font-size:11.8px">Fichier texte direct</div>
<div class="a" style="left:796px;top:256px;width:802px;height:22px;border:1px solid #8e8e8e;background:#fff"></div>
<div class="t" style="left:799px;top:259px;font-size:11.5px">D:\FORMATIONS\Exterieur\Quantilille\2023\Atelier_QO_Spad\PEE_K1_extract.csv</div>
<div class="a" style="left:1599px;top:256px;width:22px;height:22px;border:1px solid #8e8e8e;background:linear-gradient(135deg,#fdfdfd,#dcdcdc)"></div>
<div class="t" style="left:1606px;top:259px;font-size:11px;font-weight:bold">...</div>
<svg style="left:667.5px;top:301.5px" width="13" height="13" viewBox="0 0 13 13"><circle cx="6.5" cy="6.5" r="5.6" fill="#fff" stroke="#666" stroke-width="0.8"/></svg>
<div class="t" style="left:689px;top:287px;font-size:11.8px">Connexion</div>
<div class="a" style="left:796px;top:285px;width:399px;height:20px;border:1px solid #adadad;background:#f0f3f8"></div>
<svg style="left:1183px;top:293px" width="9" height="5" viewBox="0 0 9 5"><path d="M0 0 H9 L4.5 5Z" fill="#a8a8a8"/></svg>
<div class="t" style="left:800px;top:287px;color:#a8a8a8;font-size:12.1px">&lt;Aucune connexion&gt;</div>
<div class="t" style="left:689px;top:314px;font-size:11.8px">Fichier</div>
<div class="a" style="left:796px;top:312px;width:399px;height:20px;border:1px solid #adadad;background:#f0f3f8"></div>
<svg style="left:1183px;top:320px" width="9" height="5" viewBox="0 0 9 5"><path d="M0 0 H9 L4.5 5Z" fill="#a8a8a8"/></svg>
<div class="t" style="left:656px;top:339px;color:#2a63ad;font-size:11.2px">Paramètres</div>
<div class="a" style="left:717px;top:347px;width:907px;height:1px;background:#9a9a9a"></div>
<div class="t" style="left:668px;top:359px;font-size:11.5px">Séparateur de lignes</div>
<div class="a" style="left:817px;top:357px;width:268px;height:22px;border:1px solid #8e8e8e;background:#fff"></div>
<div class="a" style="left:1070px;top:358px;width:14px;height:20px;border-left:1px solid #9a9a9a;background:linear-gradient(90deg,#fbfbfb,#e2e2e2)"></div>
<svg style="left:1073px;top:366px" width="9" height="5" viewBox="0 0 9 5"><path d="M0 0 H9 L4.5 5Z" fill="#000"/></svg>
<div class="t" style="left:821px;top:359px;font-size:12.1px">détection automatique (Windows/Unix)</div>
<div class="t" style="left:668px;top:387px;font-size:11.8px">Séparateur de colonnes</div>
<div class="a" style="left:817px;top:385px;width:268px;height:22px;border:1px solid #8e8e8e;background:#fff"></div>
<div class="a" style="left:1070px;top:386px;width:14px;height:20px;border-left:1px solid #9a9a9a;background:linear-gradient(90deg,#fbfbfb,#e2e2e2)"></div>
<svg style="left:1073px;top:394px" width="9" height="5" viewBox="0 0 9 5"><path d="M0 0 H9 L4.5 5Z" fill="#000"/></svg>
<div class="t" style="left:821px;top:387px;font-size:12.1px">;</div>
<div class="t" style="left:668px;top:415px;font-size:11.8px">Délimiteur de texte</div>
<div class="a" style="left:817px;top:413px;width:269px;height:22px;border:1px solid #8e8e8e;background:#fff"></div>
<div class="a" style="left:1071px;top:414px;width:14px;height:20px;border-left:1px solid #9a9a9a;background:linear-gradient(90deg,#fbfbfb,#e2e2e2)"></div>
<svg style="left:1074px;top:422px" width="9" height="5" viewBox="0 0 9 5"><path d="M0 0 H9 L4.5 5Z" fill="#000"/></svg>
<div class="t" style="left:821px;top:415px;font-size:12.1px">&lt;aucun&gt;</div>
<svg style="left:1097px;top:418px" width="13" height="13" viewBox="0 0 13 13"><rect x="0.5" y="0.5" width="11.5" height="11.5" fill="#f8f9fb" stroke="#b0b0b0"/></svg>
<div class="t" style="left:1114px;top:415px;color:#a6a6a6;font-size:11.72px">Ignorer les séparateurs de ligne entre délimiteurs</div>
<svg style="left:668px;top:445px" width="13" height="13" viewBox="0 0 13 13"><rect x="0.5" y="0.5" width="11.5" height="11.5" fill="#f8f9fb" stroke="#666"/><path d="M2.8 6 L5 8.5 L9.5 3.2" fill="none" stroke="#000" stroke-width="1.8"/></svg>
<div class="t" style="left:685px;top:443px;font-size:11.6px">Noms des variables sur la 1re ligne</div>
<svg style="left:887px;top:445px" width="13" height="13" viewBox="0 0 13 13"><rect x="0.5" y="0.5" width="11.5" height="11.5" fill="#f8f9fb" stroke="#666"/><path d="M2.8 6 L5 8.5 L9.5 3.2" fill="none" stroke="#000" stroke-width="1.8"/></svg>
<div class="t" style="left:904px;top:443px;font-size:11.6px">Épurer (supprime les espaces en début et fin de chaîne)</div>
<div class="t" style="left:668px;top:468px;font-size:11.8px">Séparateur décimal</div>
<svg style="left:816.5px;top:469.5px" width="13" height="13" viewBox="0 0 13 13"><circle cx="6.5" cy="6.5" r="5.6" fill="#fff" stroke="#666" stroke-width="0.8"/></svg>
<div class="t" style="left:834px;top:468px;font-size:11.8px">virgule (,)</div>
<svg style="left:889.5px;top:469.5px" width="13" height="13" viewBox="0 0 13 13"><circle cx="6.5" cy="6.5" r="5.6" fill="#fff" stroke="#666" stroke-width="0.8"/></svg>
<div class="t" style="left:908px;top:468px;font-size:11.8px">point (.)</div>
<svg style="left:954.5px;top:469.5px" width="13" height="13" viewBox="0 0 13 13"><circle cx="6.5" cy="6.5" r="5.6" fill="#fff" stroke="#666" stroke-width="0.8"/><circle cx="6.5" cy="6.5" r="3" fill="#000"/></svg>
<div class="t" style="left:972px;top:468px;font-size:11.8px">automatique</div>
<div class="t" style="left:668px;top:494px;font-size:11.8px">Format d'import des dates</div>
<div class="a" style="left:817px;top:491px;width:269px;height:22px;border:1px solid #8e8e8e;background:#fff"></div>
<div class="a" style="left:1071px;top:492px;width:14px;height:20px;border-left:1px solid #9a9a9a;background:linear-gradient(90deg,#fbfbfb,#e2e2e2)"></div>
<svg style="left:1074px;top:500px" width="9" height="5" viewBox="0 0 9 5"><path d="M0 0 H9 L4.5 5Z" fill="#000"/></svg>
<div class="t" style="left:821px;top:493px;font-size:12.1px">dd/MM/yyyy</div>
<svg style="left:1097px;top:496px" width="13" height="13" viewBox="0 0 13 13"><rect x="0.5" y="0.5" width="11.5" height="11.5" fill="#f8f9fb" stroke="#666"/></svg>
<div class="t" style="left:1114px;top:494px;font-size:11.8px">Année de départ manuelle si "yy"</div>
<div class="a" style="left:1300px;top:491px;width:67px;height:23px;border:1px solid #adadad;background:#fff"></div>
<div class="a" style="left:1350px;top:492px;width:16px;height:21px;border-left:1px solid #c8c8c8;background:linear-gradient(90deg,#f6f6f6,#e4e4e4)"></div>
<div class="a" style="left:1350px;top:502px;width:16px;height:1px;background:#c8c8c8"></div>
<svg style="left:1354px;top:495px" width="9" height="4" viewBox="0 0 9 4"><path d="M0 4 H9 L4.5 0Z" fill="#a0a0a0"/></svg>
<svg style="left:1354px;top:506px" width="9" height="4" viewBox="0 0 9 4"><path d="M0 0 H9 L4.5 4Z" fill="#a0a0a0"/></svg>
<div class="t" style="left:1300px;top:494px;color:#a8a8a8;font-size:11.8px"><span style="display:inline-block;width:47px;text-align:right">1923</span></div>
<div class="t" style="left:668px;top:522px;font-size:11.8px">Codage des caractères</div>
<div class="a" style="left:817px;top:519px;width:268px;height:22px;border:1px solid #8e8e8e;background:#fff"></div>
<div class="a" style="left:1070px;top:520px;width:14px;height:20px;border-left:1px solid #9a9a9a;background:linear-gradient(90deg,#fbfbfb,#e2e2e2)"></div>
<svg style="left:1073px;top:528px" width="9" height="5" viewBox="0 0 9 5"><path d="M0 0 H9 L4.5 5Z" fill="#000"/></svg>
<div class="t" style="left:821px;top:521px;font-size:12.1px">automatique</div>
<div class="t" style="left:656px;top:552px;color:#2a63ad;font-size:11.55px">Aperçu des données</div>
<div class="a" style="left:765px;top:559px;width:859px;height:1px;background:#9a9a9a"></div>
<div class="a" style="left:658px;top:569px;width:963px;height:202px;border:1px solid #8e8e8e;background:#fff"></div>
<div class="a" style="left:659px;top:570px;width:961px;height:20px;background:#f0f3f8"></div>
<div class="a" style="left:659px;top:570px;width:44px;height:20px;border-right:1px solid #9a9a9a;border-bottom:1px solid #9a9a9a;border-left:1px solid #fff"></div>
<div class="a" style="left:703px;top:570px;width:19px;height:20px;border-right:1px solid #9a9a9a;border-bottom:1px solid #9a9a9a;border-left:1px solid #fff"></div>
<div class="t" style="left:705px;top:572px;font-size:11.6px">q...</div>
<div class="a" style="left:722px;top:570px;width:75px;height:20px;border-right:1px solid #9a9a9a;border-bottom:1px solid #9a9a9a;border-left:1px solid #fff"></div>
<div class="t" style="left:722px;top:572px;width:75px;text-align:center;font-size:11.6px">sexe</div>
<div class="a" style="left:797px;top:570px;width:75px;height:20px;border-right:1px solid #9a9a9a;border-bottom:1px solid #9a9a9a;border-left:1px solid #fff"></div>
<div class="t" style="left:797px;top:572px;width:75px;text-align:center;font-size:11.6px">aget</div>
<div class="a" style="left:872px;top:570px;width:75px;height:20px;border-right:1px solid #9a9a9a;border-bottom:1px solid #9a9a9a;border-left:1px solid #fff"></div>
<div class="t" style="left:872px;top:572px;width:75px;text-align:center;font-size:11.6px">matrim</div>
<div class="a" style="left:947px;top:570px;width:75px;height:20px;border-right:1px solid #9a9a9a;border-bottom:1px solid #9a9a9a;border-left:1px solid #fff"></div>
<div class="t" style="left:947px;top:572px;width:75px;text-align:center;font-size:11.6px">pratique</div>
<div class="a" style="left:1022px;top:570px;width:75px;height:20px;border-right:1px solid #9a9a9a;border-bottom:1px solid #9a9a9a;border-left:1px solid #fff"></div>
<div class="t" style="left:1022px;top:572px;width:75px;text-align:center;font-size:11.6px">enf</div>
<div class="a" style="left:1097px;top:570px;width:25px;height:20px;border-right:1px solid #9a9a9a;border-bottom:1px solid #9a9a9a;border-left:1px solid #fff"></div>
<div class="t" style="left:1099px;top:572px;font-size:11.6px">ac...</div>
<div class="a" style="left:1122px;top:570px;width:75px;height:20px;border-right:1px solid #9a9a9a;border-bottom:1px solid #9a9a9a;border-left:1px solid #fff"></div>
<div class="t" style="left:1122px;top:572px;width:75px;text-align:center;font-size:11.6px">prof</div>
<div class="a" style="left:1197px;top:570px;width:75px;height:20px;border-right:1px solid #9a9a9a;border-bottom:1px solid #9a9a9a;border-left:1px solid #fff"></div>
<div class="t" style="left:1197px;top:572px;width:75px;text-align:center;font-size:11.6px">dipl</div>
<div class="a" style="left:1272px;top:570px;width:75px;height:20px;border-right:1px solid #9a9a9a;border-bottom:1px solid #9a9a9a;border-left:1px solid #fff"></div>
<div class="t" style="left:1272px;top:572px;width:75px;text-align:center;font-size:11.6px">vote</div>
<div class="a" style="left:1347px;top:570px;width:75px;height:20px;border-right:1px solid #9a9a9a;border-bottom:1px solid #9a9a9a;border-left:1px solid #fff"></div>
<div class="t" style="left:1347px;top:572px;width:75px;text-align:center;font-size:11.6px">habitat</div>
<div class="a" style="left:1422px;top:570px;width:22px;height:20px;border-right:1px solid #9a9a9a;border-bottom:1px solid #9a9a9a;border-left:1px solid #fff"></div>
<div class="t" style="left:1424px;top:572px;font-size:11.6px">lo...</div>
<div class="a" style="left:1444px;top:570px;width:15px;height:20px;border-right:1px solid #9a9a9a;border-bottom:1px solid #9a9a9a;border-left:1px solid #fff"></div>
<div class="t" style="left:1446px;top:572px;font-size:11.6px">r...</div>
<div class="a" style="left:1459px;top:570px;width:75px;height:20px;border-right:1px solid #9a9a9a;border-bottom:1px solid #9a9a9a;border-left:1px solid #fff"></div>
<div class="t" style="left:1459px;top:572px;width:75px;text-align:center;font-size:11.6px">region</div>
<div class="a" style="left:1534px;top:570px;width:86px;height:20px;border-right:1px solid #9a9a9a;border-bottom:1px solid #9a9a9a;border-left:1px solid #fff"></div>
<div class="t" style="left:1534px;top:572px;width:71px;text-align:center;font-size:11.6px">K1</div>
<div class="a" style="left:659px;top:607px;width:946px;height:1px;background:#eef1f6"></div>
<div class="a" style="left:659px;top:625px;width:946px;height:1px;background:#eef1f6"></div>
<div class="a" style="left:659px;top:643px;width:946px;height:1px;background:#eef1f6"></div>
<div class="a" style="left:659px;top:661px;width:946px;height:1px;background:#eef1f6"></div>
<div class="a" style="left:659px;top:679px;width:946px;height:1px;background:#eef1f6"></div>
<div class="a" style="left:659px;top:697px;width:946px;height:1px;background:#eef1f6"></div>
<div class="a" style="left:659px;top:715px;width:946px;height:1px;background:#eef1f6"></div>
<div class="a" style="left:659px;top:733px;width:946px;height:1px;background:#eef1f6"></div>
<div class="a" style="left:659px;top:751px;width:946px;height:1px;background:#eef1f6"></div>
<div class="a" style="left:659px;top:769px;width:946px;height:1px;background:#eef1f6"></div>
<div class="a" style="left:702px;top:590px;width:1px;height:164px;background:#eef1f6"></div>
<div class="a" style="left:721px;top:590px;width:1px;height:164px;background:#eef1f6"></div>
<div class="a" style="left:796px;top:590px;width:1px;height:164px;background:#eef1f6"></div>
<div class="a" style="left:871px;top:590px;width:1px;height:164px;background:#eef1f6"></div>
<div class="a" style="left:946px;top:590px;width:1px;height:164px;background:#eef1f6"></div>
<div class="a" style="left:1021px;top:590px;width:1px;height:164px;background:#eef1f6"></div>
<div class="a" style="left:1096px;top:590px;width:1px;height:164px;background:#eef1f6"></div>
<div class="a" style="left:1121px;top:590px;width:1px;height:164px;background:#eef1f6"></div>
<div class="a" style="left:1196px;top:590px;width:1px;height:164px;background:#eef1f6"></div>
<div class="a" style="left:1271px;top:590px;width:1px;height:164px;background:#eef1f6"></div>
<div class="a" style="left:1346px;top:590px;width:1px;height:164px;background:#eef1f6"></div>
<div class="a" style="left:1421px;top:590px;width:1px;height:164px;background:#eef1f6"></div>
<div class="a" style="left:1443px;top:590px;width:1px;height:164px;background:#eef1f6"></div>
<div class="a" style="left:1458px;top:590px;width:1px;height:164px;background:#eef1f6"></div>
<div class="a" style="left:1533px;top:590px;width:1px;height:164px;background:#eef1f6"></div>
<div class="t" style="left:659px;top:590px;width:41px;text-align:right;font-size:11.6px">3 041</div>
<div class="t" style="left:704px;top:590px;font-size:11.6px">3...</div>
<div class="t" style="left:723px;top:590px;font-size:11.6px">femme</div>
<div class="t" style="left:798px;top:590px;font-size:11.6px">30-39ans</div>
<div class="t" style="left:873px;top:590px;font-size:11.6px">En_couple</div>
<div class="t" style="left:948px;top:590px;font-size:11.6px">Rrelig_non</div>
<div class="t" style="left:1023px;top:590px;font-size:11.6px">avecEnfant</div>
<div class="t" style="left:1098px;top:590px;font-size:11.6px">ac...</div>
<div class="t" style="left:1123px;top:590px;font-size:11.6px">prof_interm</div>
<div class="t" style="left:1198px;top:590px;font-size:11.6px">prof</div>
<div class="t" style="left:1273px;top:590px;font-size:11.6px">ecolo_oui</div>
<div class="t" style="left:1348px;top:590px;font-size:11.6px">individuel</div>
<div class="t" style="left:1423px;top:590px;font-size:11.6px">B...</div>
<div class="t" style="left:1445px;top:590px;font-size:11.6px">...</div>
<div class="t" style="left:1460px;top:590px;font-size:11.6px">Seine</div>
<div class="t" style="left:1535px;top:590px;font-size:11.6px">le respect d...</div>
<div class="t" style="left:659px;top:608px;width:41px;text-align:right;font-size:11.6px">4 932</div>
<div class="t" style="left:704px;top:608px;font-size:11.6px">4...</div>
<div class="t" style="left:723px;top:608px;font-size:11.6px">homme</div>
<div class="t" style="left:798px;top:608px;font-size:11.6px">40-49ans</div>
<div class="t" style="left:873px;top:608px;font-size:11.6px">En_couple</div>
<div class="t" style="left:948px;top:608px;font-size:11.6px">Relig_occas</div>
<div class="t" style="left:1023px;top:608px;font-size:11.6px">avecEnfant</div>
<div class="t" style="left:1098px;top:608px;font-size:11.6px">ac...</div>
<div class="t" style="left:1123px;top:608px;font-size:11.6px">prof_interm</div>
<div class="t" style="left:1198px;top:608px;font-size:11.6px">prof</div>
<div class="t" style="left:1273px;top:608px;font-size:11.6px">ecolo_non</div>
<div class="t" style="left:1348px;top:608px;font-size:11.6px">individuel</div>
<div class="t" style="left:1423px;top:608px;font-size:11.6px">B...</div>
<div class="t" style="left:1445px;top:608px;font-size:11.6px">...</div>
<div class="t" style="left:1460px;top:608px;font-size:11.6px">Seine</div>
<div class="t" style="left:1535px;top:608px;font-size:11.6px">propreté de...</div>
<div class="t" style="left:659px;top:626px;width:41px;text-align:right;font-size:11.6px">2 189</div>
<div class="t" style="left:704px;top:626px;font-size:11.6px">2...</div>
<div class="t" style="left:723px;top:626px;font-size:11.6px">homme</div>
<div class="t" style="left:798px;top:626px;font-size:11.6px">60ans+</div>
<div class="t" style="left:873px;top:626px;font-size:11.6px">En_couple</div>
<div class="t" style="left:948px;top:626px;font-size:11.6px">Relig_regul</div>
<div class="t" style="left:1023px;top:626px;font-size:11.6px">avecEnfant</div>
<div class="t" style="left:1098px;top:626px;font-size:11.6px">in...</div>
<div class="t" style="left:1123px;top:626px;font-size:11.6px">retraite</div>
<div class="t" style="left:1198px;top:626px;font-size:11.6px">Bac</div>
<div class="t" style="left:1273px;top:626px;font-size:11.6px">ecolo_non</div>
<div class="t" style="left:1348px;top:626px;font-size:11.6px">individuel</div>
<div class="t" style="left:1423px;top:626px;font-size:11.6px">GV</div>
<div class="t" style="left:1445px;top:626px;font-size:11.6px">...</div>
<div class="t" style="left:1460px;top:626px;font-size:11.6px">Bretagne</div>
<div class="t" style="left:1535px;top:626px;font-size:11.6px">ce qui est a...</div>
<div class="t" style="left:659px;top:644px;width:41px;text-align:right;font-size:11.6px">910</div>
<div class="t" style="left:704px;top:644px;font-size:11.6px">9...</div>
<div class="t" style="left:723px;top:644px;font-size:11.6px">homme</div>
<div class="t" style="left:798px;top:644px;font-size:11.6px">40-49ans</div>
<div class="t" style="left:873px;top:644px;font-size:11.6px">En_couple</div>
<div class="t" style="left:948px;top:644px;font-size:11.6px">Rrelig_non</div>
<div class="t" style="left:1023px;top:644px;font-size:11.6px">avecEnfant</div>
<div class="t" style="left:1098px;top:644px;font-size:11.6px">ac...</div>
<div class="t" style="left:1123px;top:644px;font-size:11.6px">commerc</div>
<div class="t" style="left:1198px;top:644px;font-size:11.6px">prof</div>
<div class="t" style="left:1273px;top:644px;font-size:11.6px">ecolo_non</div>
<div class="t" style="left:1348px;top:644px;font-size:11.6px">collectif</div>
<div class="t" style="left:1423px;top:644px;font-size:11.6px">GV</div>
<div class="t" style="left:1445px;top:644px;font-size:11.6px">...</div>
<div class="t" style="left:1460px;top:644px;font-size:11.6px">Mediterran...</div>
<div class="t" style="left:1535px;top:644px;font-size:11.6px">que chacun...</div>
<div class="t" style="left:659px;top:662px;width:41px;text-align:right;font-size:11.6px">2 275</div>
<div class="t" style="left:704px;top:662px;font-size:11.6px">2...</div>
<div class="t" style="left:723px;top:662px;font-size:11.6px">homme</div>
<div class="t" style="left:798px;top:662px;font-size:11.6px">60ans+</div>
<div class="t" style="left:873px;top:662px;font-size:11.6px">En_couple</div>
<div class="t" style="left:948px;top:662px;font-size:11.6px">Relig_regul</div>
<div class="t" style="left:1023px;top:662px;font-size:11.6px">avecEnfant</div>
<div class="t" style="left:1098px;top:662px;font-size:11.6px">in...</div>
<div class="t" style="left:1123px;top:662px;font-size:11.6px">retraite</div>
<div class="t" style="left:1198px;top:662px;font-size:11.6px">Supérieur</div>
<div class="t" style="left:1273px;top:662px;font-size:11.6px">ecolo_oui</div>
<div class="t" style="left:1348px;top:662px;font-size:11.6px">individuel</div>
<div class="t" style="left:1423px;top:662px;font-size:11.6px">B...</div>
<div class="t" style="left:1445px;top:662px;font-size:11.6px">...</div>
<div class="t" style="left:1460px;top:662px;font-size:11.6px">S_Ouest</div>
<div class="t" style="left:1535px;top:662px;font-size:11.6px">l'eau, l'air, l...</div>
<div class="t" style="left:659px;top:680px;width:41px;text-align:right;font-size:11.6px">3 307</div>
<div class="t" style="left:704px;top:680px;font-size:11.6px">3...</div>
<div class="t" style="left:723px;top:680px;font-size:11.6px">femme</div>
<div class="t" style="left:798px;top:680px;font-size:11.6px">50-59ans</div>
<div class="t" style="left:873px;top:680px;font-size:11.6px">Seul</div>
<div class="t" style="left:948px;top:680px;font-size:11.6px">Rrelig_non</div>
<div class="t" style="left:1023px;top:680px;font-size:11.6px">avecEnfant</div>
<div class="t" style="left:1098px;top:680px;font-size:11.6px">ch...</div>
<div class="t" style="left:1123px;top:680px;font-size:11.6px">inactif</div>
<div class="t" style="left:1198px;top:680px;font-size:11.6px">Supérieur</div>
<div class="t" style="left:1273px;top:680px;font-size:11.6px">ecolo_oui</div>
<div class="t" style="left:1348px;top:680px;font-size:11.6px">individuel</div>
<div class="t" style="left:1423px;top:680px;font-size:11.6px">B...</div>
<div class="t" style="left:1445px;top:680px;font-size:11.6px">...</div>
<div class="t" style="left:1460px;top:680px;font-size:11.6px">Jura_Alpes</div>
<div class="t" style="left:1535px;top:680px;font-size:11.6px">le lieu dans ...</div>
<div class="t" style="left:659px;top:698px;width:41px;text-align:right;font-size:11.6px">5 336</div>
<div class="t" style="left:704px;top:698px;font-size:11.6px">5...</div>
<div class="t" style="left:723px;top:698px;font-size:11.6px">femme</div>
<div class="t" style="left:798px;top:698px;font-size:11.6px">20-29ans</div>
<div class="t" style="left:873px;top:698px;font-size:11.6px">Seul</div>
<div class="t" style="left:948px;top:698px;font-size:11.6px">Relig_occas</div>
<div class="t" style="left:1023px;top:698px;font-size:11.6px">sansEnfant</div>
<div class="t" style="left:1098px;top:698px;font-size:11.6px">ac...</div>
<div class="t" style="left:1123px;top:698px;font-size:11.6px">employe</div>
<div class="t" style="left:1198px;top:698px;font-size:11.6px">Supérieur</div>
<div class="t" style="left:1273px;top:698px;font-size:11.6px">ecolo_non</div>
<div class="t" style="left:1348px;top:698px;font-size:11.6px">individuel</div>
<div class="t" style="left:1423px;top:698px;font-size:11.6px">B...</div>
<div class="t" style="left:1445px;top:698px;font-size:11.6px">...</div>
<div class="t" style="left:1460px;top:698px;font-size:11.6px">S_Ouest</div>
<div class="t" style="left:1535px;top:698px;font-size:11.6px">nature, écol...</div>
<div class="t" style="left:659px;top:716px;width:41px;text-align:right;font-size:11.6px">1 807</div>
<div class="t" style="left:704px;top:716px;font-size:11.6px">1...</div>
<div class="t" style="left:723px;top:716px;font-size:11.6px">femme</div>
<div class="t" style="left:798px;top:716px;font-size:11.6px">60ans+</div>
<div class="t" style="left:873px;top:716px;font-size:11.6px">En_couple</div>
<div class="t" style="left:948px;top:716px;font-size:11.6px">Relig_occas</div>
<div class="t" style="left:1023px;top:716px;font-size:11.6px">avecEnfant</div>
<div class="t" style="left:1098px;top:716px;font-size:11.6px">ac...</div>
<div class="t" style="left:1123px;top:716px;font-size:11.6px">commerc</div>
<div class="t" style="left:1198px;top:716px;font-size:11.6px">Be</div>
<div class="t" style="left:1273px;top:716px;font-size:11.6px">ecolo_non</div>
<div class="t" style="left:1348px;top:716px;font-size:11.6px">individuel</div>
<div class="t" style="left:1423px;top:716px;font-size:11.6px">Vi...</div>
<div class="t" style="left:1445px;top:716px;font-size:11.6px">...</div>
<div class="t" style="left:1460px;top:716px;font-size:11.6px">Nord</div>
<div class="t" style="left:1535px;top:716px;font-size:11.6px">les arbres, u...</div>
<div class="t" style="left:659px;top:734px;width:41px;text-align:right;font-size:11.6px">4 097</div>
<div class="t" style="left:704px;top:734px;font-size:11.6px">4...</div>
<div class="t" style="left:723px;top:734px;font-size:11.6px">homme</div>
<div class="t" style="left:798px;top:734px;font-size:11.6px">60ans+</div>
<div class="t" style="left:873px;top:734px;font-size:11.6px">En_couple</div>
<div class="t" style="left:948px;top:734px;font-size:11.6px">Relig_occas</div>
<div class="t" style="left:1023px;top:734px;font-size:11.6px">avecEnfant</div>
<div class="t" style="left:1098px;top:734px;font-size:11.6px">in...</div>
<div class="t" style="left:1123px;top:734px;font-size:11.6px">retraite</div>
<div class="t" style="left:1198px;top:734px;font-size:11.6px">NOdip</div>
<div class="t" style="left:1273px;top:734px;font-size:11.6px">ecolo_oui</div>
<div class="t" style="left:1348px;top:734px;font-size:11.6px">individuel</div>
<div class="t" style="left:1423px;top:734px;font-size:11.6px">R...</div>
<div class="t" style="left:1445px;top:734px;font-size:11.6px">...</div>
<div class="t" style="left:1460px;top:734px;font-size:11.6px">Bretagne</div>
<div class="t" style="left:1535px;top:734px;font-size:11.6px">la nature, le...</div>
<div class="a" style="left:1605px;top:590px;width:15px;height:164px;background:#f0f3f8;border-left:1px solid #c8c8c8"></div>
<div class="a" style="left:1605px;top:590px;width:15px;height:17px;background:linear-gradient(90deg,#fafafa,#e2e2e2);border:1px solid #c8c8c8"></div>
<svg style="left:1609px;top:596px" width="8" height="4" viewBox="0 0 8 4"><path d="M0 4 H8 L4 0Z" fill="#000"/></svg>
<div class="a" style="left:1605px;top:607px;width:15px;height:55px;background:radial-gradient(#8f9db0 0.7px,transparent 0.9px) 0 0/3px 3px,linear-gradient(90deg,#f2f5f9,#b4c5db);border:1px solid #9fb0c6"></div>
<div class="a" style="left:1605px;top:738px;width:15px;height:16px;background:linear-gradient(90deg,#fafafa,#e2e2e2);border:1px solid #c8c8c8"></div>
<svg style="left:1609px;top:744px" width="8" height="4" viewBox="0 0 8 4"><path d="M0 0 H8 L4 4Z" fill="#000"/></svg>
<div class="a" style="left:659px;top:754px;width:961px;height:16px;background:#f0f3f8;border-top:1px solid #9a9a9a"></div>
<div class="a" style="left:659px;top:755px;width:16px;height:15px;background:linear-gradient(#fafafa,#e2e2e2);border-right:1px solid #c8c8c8"></div>
<svg style="left:663px;top:758px" width="5" height="9" viewBox="0 0 5 9"><path d="M5 0 V9 L0 4.5Z" fill="#000"/></svg>
<div class="a" style="left:703px;top:755px;width:883px;height:15px;background:radial-gradient(#8f9db0 0.7px,transparent 0.9px) 0 0/3px 3px,linear-gradient(#f2f5f9,#b4c5db);border:1px solid #9fb0c6;border-top:none"></div>
<div class="a" style="left:1590px;top:755px;width:15px;height:15px;background:linear-gradient(#fafafa,#e2e2e2);border-left:1px solid #c8c8c8;border-right:1px solid #c8c8c8"></div>
<svg style="left:1596px;top:758px" width="5" height="9" viewBox="0 0 5 9"><path d="M0 0 V9 L5 4.5Z" fill="#000"/></svg>
<div class="t" style="left:656px;top:776px;color:#2a63ad;font-size:12.1px">Échantillonnage à l'importation</div>
<div class="a" style="left:824px;top:784px;width:800px;height:1px;background:#9a9a9a"></div>
<svg style="left:668px;top:800px" width="13" height="13" viewBox="0 0 13 13"><rect x="0.5" y="0.5" width="11.5" height="11.5" fill="#f8f9fb" stroke="#666"/></svg>
<div class="t" style="left:685px;top:798px;font-size:11.9px">Limiter le nombre de lignes importées</div>
<div class="a" style="left:896px;top:795px;width:80px;height:23px;border:1px solid #adadad;background:#fff"></div>
<div class="a" style="left:959px;top:796px;width:16px;height:21px;border-left:1px solid #c8c8c8;background:linear-gradient(90deg,#f6f6f6,#e4e4e4)"></div>
<div class="a" style="left:959px;top:806px;width:16px;height:1px;background:#c8c8c8"></div>
<svg style="left:963px;top:799px" width="9" height="4" viewBox="0 0 9 4"><path d="M0 4 H9 L4.5 0Z" fill="#a0a0a0"/></svg>
<svg style="left:963px;top:810px" width="9" height="4" viewBox="0 0 9 4"><path d="M0 0 H9 L4.5 4Z" fill="#a0a0a0"/></svg>
<div class="t" style="left:896px;top:798px;color:#a8a8a8;font-size:11.8px"><span style="display:inline-block;width:61px;text-align:right">1000</span></div>
<svg style="left:1016px;top:800px" width="13" height="13" viewBox="0 0 13 13"><rect x="0.5" y="0.5" width="11.5" height="11.5" fill="#f8f9fb" stroke="#666"/></svg>
<div class="t" style="left:1033px;top:798px;font-size:11.8px">Tirage aléatoire (probabilité)</div>
<div class="a" style="left:1192px;top:795px;width:80px;height:23px;border:1px solid #adadad;background:#fff"></div>
<div class="a" style="left:1255px;top:796px;width:16px;height:21px;border-left:1px solid #c8c8c8;background:linear-gradient(90deg,#f6f6f6,#e4e4e4)"></div>
<div class="a" style="left:1255px;top:806px;width:16px;height:1px;background:#c8c8c8"></div>
<svg style="left:1259px;top:799px" width="9" height="4" viewBox="0 0 9 4"><path d="M0 4 H9 L4.5 0Z" fill="#a0a0a0"/></svg>
<svg style="left:1259px;top:810px" width="9" height="4" viewBox="0 0 9 4"><path d="M0 0 H9 L4.5 4Z" fill="#a0a0a0"/></svg>
<div class="t" style="left:1192px;top:798px;color:#a8a8a8;font-size:11.8px"><span style="display:inline-block;width:61px;text-align:right">0.1</span></div>
<svg style="left:1276px;top:796px" width="20" height="20" viewBox="0 0 20 20"><path d="M0.5 5 L4 0.5 H19.5 V14 L16 19.5 H0.5 Z" fill="#f4f4f4" stroke="#555"/><path d="M0.5 5 H16 V19.5 M16 5 L19.5 0.5" fill="none" stroke="#555"/><circle cx="5" cy="9.5" r="1.4" fill="#333"/><circle cx="11" cy="9.5" r="1.4" fill="#333"/><circle cx="5" cy="15" r="1.4" fill="#333"/><circle cx="11" cy="15" r="1.4" fill="#333"/><circle cx="10" cy="2.8" r="1" fill="#333"/><circle cx="18" cy="8" r="0.9" fill="#333"/></svg>
<svg style="left:650px;top:825px" width="990" height="25" viewBox="0 0 990 25"><path d="M63 0.5 L57 20.5 H149 L155 0.5" fill="#f0f3f8" stroke="none"/><path d="M0 0.5 H4" stroke="#8e8e8e"/><path d="M4 1 C7 3 8 9 11 20" fill="none" stroke="#ffffff" stroke-width="1.2"/><path d="M11 20.5 H57 L63 0.5 H990" fill="none" stroke="#8e8e8e"/><path d="M63 1 C62 8 62 16 66 19.5" fill="none" stroke="#ffffff" stroke-width="1.2"/><path d="M66 19.5 H149 L155 0.5" fill="none" stroke="#8e8e8e"/></svg>
<div class="t" style="left:664px;top:828px;color:#1f5ba3;font-weight:bold;font-size:12.3px">Import</div>
<div class="t" style="left:720px;top:827px;color:#1f5ba3;font-weight:bold;font-size:11.8px">Métadonnées</div>
</body></html>
